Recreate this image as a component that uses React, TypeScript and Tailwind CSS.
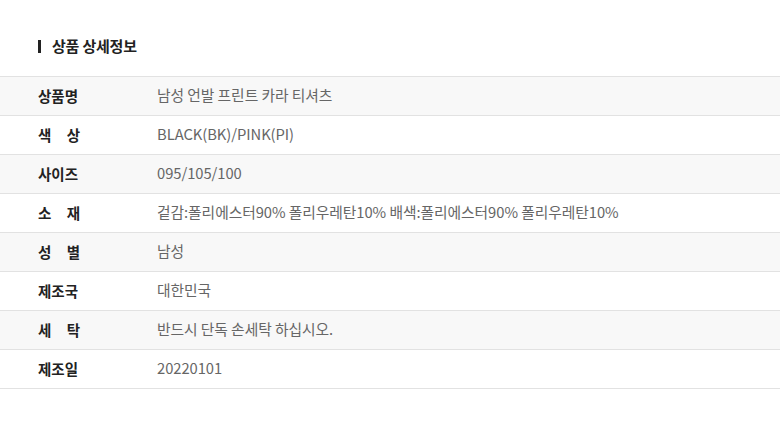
import React from "react";

const rows: { label: string; spaced?: boolean; value: string }[] = [
  { label: "상품명", value: "남성 언발 프린트 카라 티셔츠" },
  { label: "색상", spaced: true, value: "BLACK(BK)/PINK(PI)" },
  { label: "사이즈", value: "095/105/100" },
  { label: "소재", spaced: true, value: "겉감:폴리에스터90% 폴리우레탄10% 배색:폴리에스터90% 폴리우레탄10%" },
  { label: "성별", spaced: true, value: "남성" },
  { label: "제조국", value: "대한민국" },
  { label: "세탁", spaced: true, value: "반드시 단독 손세탁 하십시오." },
  { label: "제조일", value: "20220101" },
];

export default function App() {
  return (
    <div
      className="w-[780px] h-[427px] bg-white"
      style={{ fontFamily: '"Noto Sans CJK KR", "Noto Sans", sans-serif' }}
    >
      <div className="pt-[36px] pl-[38px] flex items-center h-[58px] pb-[2px]">
        <span className="w-[3px] h-[13px] bg-[#222]" />
        <h2 className="ml-[11px] text-[15px] font-bold text-[#222] tracking-[-0.2px]">상품 상세정보</h2>
      </div>
      <div className="mt-[18px] border-t border-[#e2e2e2]">
        {rows.map((r, i) => (
          <div
            key={i}
            className={`flex items-center h-[39px] pb-[1px] border-b border-[#e2e2e2] ${i % 2 === 0 ? "bg-[#f8f8f8]" : "bg-white"}`}
          >
            <div className="w-[157px] shrink-0 pl-[38px] text-[14.5px] font-bold text-[#222]">
              {r.spaced ? (
                <span className="flex justify-between w-[42px]">
                  <span>{r.label[0]}</span>
                  <span>{r.label[1]}</span>
                </span>
              ) : (
                r.label
              )}
            </div>
            <div className="text-[14.75px] text-[#666] tracking-[-0.05px]">{r.value}</div>
          </div>
        ))}
      </div>
    </div>
  );
}
